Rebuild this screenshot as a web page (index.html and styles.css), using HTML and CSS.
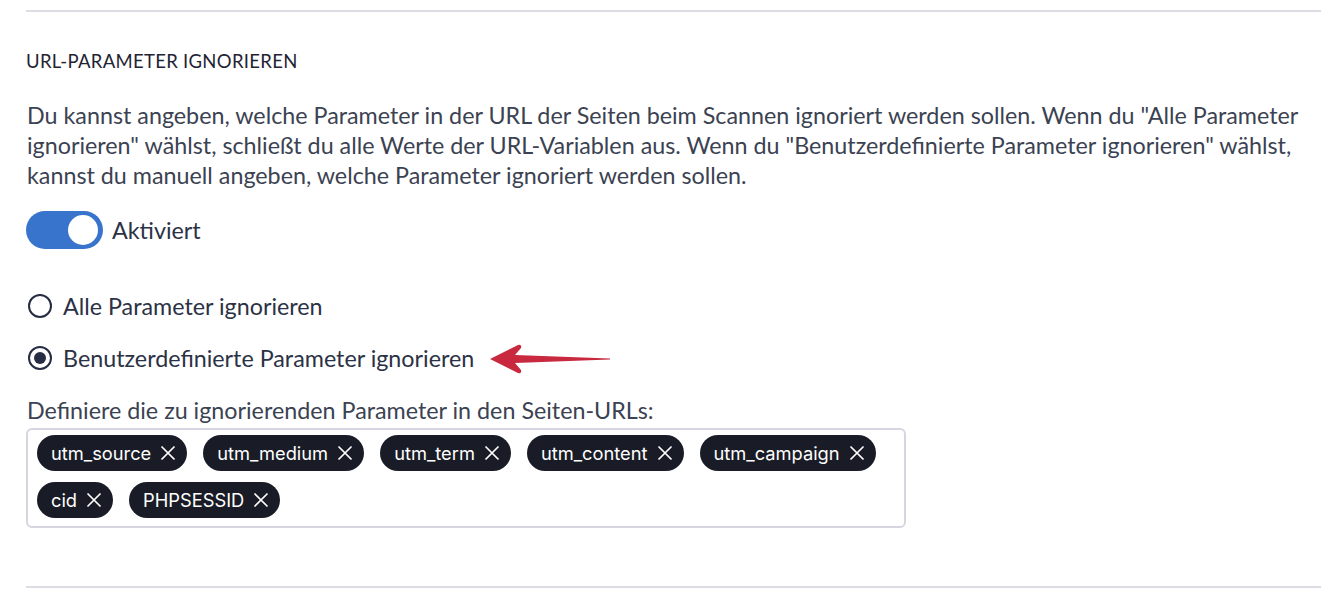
FILE: index.html
```html
<!DOCTYPE html>
<html lang="de">
<head>
<meta charset="utf-8">
<link rel="stylesheet" href="styles.css">
</head>
<body>
<div class="page">
  <hr class="rule">
  <section class="section">
    <h2 class="title">URL-PARAMETER IGNORIEREN</h2>
    <p class="desc">Du kannst angeben, welche Parameter in der URL der Seiten beim Scannen ignoriert werden sollen. Wenn du "Alle Parameter ignorieren" wählst, schließt du alle Werte der URL-Variablen aus. Wenn du "Benutzerdefinierte Parameter ignorieren" wählst, kannst du manuell angeben, welche Parameter ignoriert werden sollen.</p>
    <div class="toggle-row">
      <span class="toggle"><span class="knob"></span></span>
      <span class="toggle-label">Aktiviert</span>
    </div>
    <div class="radios">
      <div class="radio-row">
        <span class="radio"></span>
        <span class="radio-label">Alle Parameter ignorieren</span>
      </div>
      <div class="radio-row">
        <span class="radio checked"><span class="dot"></span></span>
        <span class="radio-label">Benutzerdefinierte Parameter ignorieren</span>
        <svg class="arrow" width="124" height="34" viewBox="0 0 124 34">
          <path d="M2 17 L30 3 Q34 2 33 6 L27 13 L122 16.5 L122 17.5 L27 21 L33 28 Q34 32 30 31 Z" fill="#c8293f"/>
        </svg>
      </div>
    </div>
    <div class="field-label">Definiere die zu ignorierenden Parameter in den Seiten-URLs:</div>
    <div class="tagbox">
      <span class="tag">utm_source<svg class="x" width="16" height="16" viewBox="0 0 16 16"><path d="M1.5 1.5 L14.5 14.5 M14.5 1.5 L1.5 14.5" stroke="#fff" stroke-width="1.7" fill="none"/></svg></span>
      <span class="tag">utm_medium<svg class="x" width="16" height="16" viewBox="0 0 16 16"><path d="M1.5 1.5 L14.5 14.5 M14.5 1.5 L1.5 14.5" stroke="#fff" stroke-width="1.7" fill="none"/></svg></span>
      <span class="tag">utm_term<svg class="x" width="16" height="16" viewBox="0 0 16 16"><path d="M1.5 1.5 L14.5 14.5 M14.5 1.5 L1.5 14.5" stroke="#fff" stroke-width="1.7" fill="none"/></svg></span>
      <span class="tag">utm_content<svg class="x" width="16" height="16" viewBox="0 0 16 16"><path d="M1.5 1.5 L14.5 14.5 M14.5 1.5 L1.5 14.5" stroke="#fff" stroke-width="1.7" fill="none"/></svg></span>
      <span class="tag">utm_campaign<svg class="x" width="16" height="16" viewBox="0 0 16 16"><path d="M1.5 1.5 L14.5 14.5 M14.5 1.5 L1.5 14.5" stroke="#fff" stroke-width="1.7" fill="none"/></svg></span>
      <span class="tag">cid<svg class="x" width="16" height="16" viewBox="0 0 16 16"><path d="M1.5 1.5 L14.5 14.5 M14.5 1.5 L1.5 14.5" stroke="#fff" stroke-width="1.7" fill="none"/></svg></span>
      <span class="tag">PHPSESSID<svg class="x" width="16" height="16" viewBox="0 0 16 16"><path d="M1.5 1.5 L14.5 14.5 M14.5 1.5 L1.5 14.5" stroke="#fff" stroke-width="1.7" fill="none"/></svg></span>
    </div>
  </section>
  <hr class="rule">
</div>
</body>
</html>
```
FILE: styles.css
```css
* { box-sizing: border-box; }
html, body { margin: 0; padding: 0; background: #fff; }
body { font-family: Lato, "Liberation Sans", sans-serif; color: #33394a; }
.page { padding: 10px 21px 0 26px; }
.rule { border: 0; border-top: 2px solid #dcdce4; margin: 0; }
.section { padding: 37px 0 58px 0; }
.title {
  margin: 0;
  font-size: 18.5px;
  font-weight: 400;
  letter-spacing: 0.3px;
  color: #1f2433;
  line-height: 24px;
}
.desc {
  margin: 27px 0 0 1px;
  font-size: 23.3px;
  line-height: 30px;
  color: #3b4252;
  max-width: 1300px;
}
.toggle-row { display: flex; align-items: center; gap: 9px; margin-top: 21px; }
.toggle {
  width: 77px; height: 38px; border-radius: 19px; background: #3874cb;
  display: flex; align-items: center; justify-content: flex-end; padding-right: 5px;
  flex: none;
}
.knob { width: 30px; height: 30px; border-radius: 50%; background: #fff; }
.toggle-label { font-size: 23.3px; color: #2c3245; }
.radios { margin-top: 45px; display: flex; flex-direction: column; gap: 28px; }
.radio-row { display: flex; align-items: center; height: 24px; }
.radio {
  width: 24px; height: 24px; border-radius: 50%; border: 2.5px solid #262c42;
  display: flex; align-items: center; justify-content: center; margin-left: 2px;
  flex: none;
}
.dot { width: 12px; height: 12px; border-radius: 50%; background: #262c42; }
.radio-label { margin-left: 11px; font-size: 23.3px; color: #2c3245; }
.arrow { margin-left: 14px; margin-top: 2px; }
.field-label { margin-top: 26px; margin-left: 1px; font-size: 23.3px; color: #3b4252; line-height: 28px; }
.tagbox {
  margin-top: 4px;
  width: 880px;
  border: 2px solid #d5d6df;
  border-radius: 6px;
  padding: 5px 9px 8px 9px;
  display: flex; flex-wrap: wrap; gap: 10px 16px;
  min-height: 100px;
}
.tag {
  display: inline-flex; align-items: center;
  height: 36px; border-radius: 18px; background: #191c26; color: #fff;
  font-family: Inter, "Noto Sans", sans-serif; font-size: 18.3px;
  padding: 0 11px 0 14px;
}
.x { margin-left: 9px; }
```
